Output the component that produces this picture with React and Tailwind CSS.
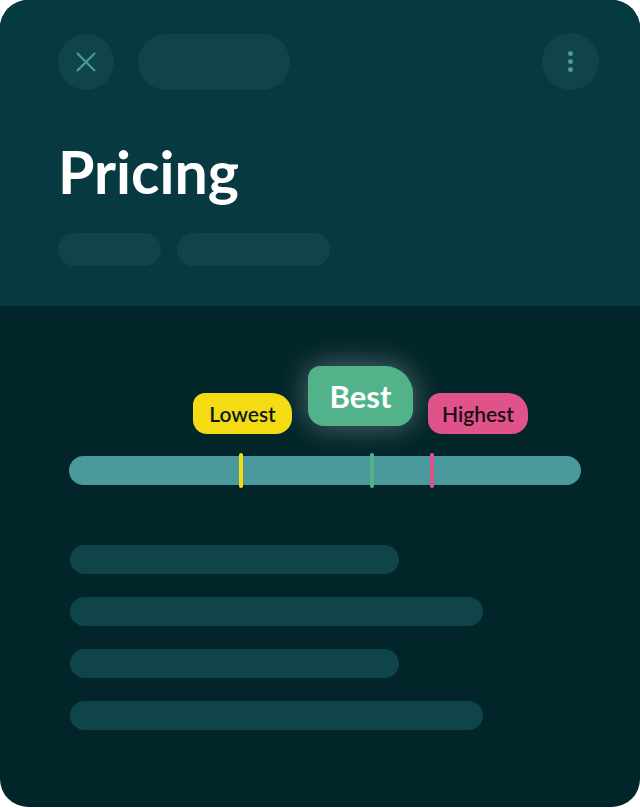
const markers = [
  { left: 'left-[170px]', color: 'bg-[#f5dc12]' },
  { left: 'left-[301px]', color: 'bg-[#52b38b]' },
  { left: 'left-[361px]', color: 'bg-[#e0528a]' },
];

export default function App() {
  return (
    <div className="min-h-screen bg-white" style={{ fontFamily: 'Lato, "Open Sans", sans-serif' }}>
      <div className="w-[640px] h-[807px] rounded-[28px] overflow-hidden flex flex-col bg-[#02252a]">
        {/* header */}
        <header className="h-[306px] shrink-0 bg-[#063a40] pl-[58px] pr-[41px] pt-[33px]">
          <div className="flex items-center justify-between">
            <div className="flex items-center gap-6">
              <button className="w-14 h-14 rounded-full bg-[#0f4549] flex items-center justify-center">
                <svg width="20" height="20" viewBox="0 0 20 20" fill="none" stroke="#4a9a9c" strokeWidth="2.2">
                  <path d="M1 1L19 19M19 1L1 19" />
                </svg>
              </button>
              <div className="w-[152px] h-14 rounded-full bg-[#0f4549]" />
            </div>
            <button className="w-[57px] h-[57px] rounded-full bg-[#0f4549] flex flex-col items-center justify-center gap-[3px]">
              <span className="w-[5px] h-[5px] rounded-full bg-[#4a9a9c]" />
              <span className="w-[5px] h-[5px] rounded-full bg-[#4a9a9c]" />
              <span className="w-[5px] h-[5px] rounded-full bg-[#4a9a9c]" />
            </button>
          </div>
          <h1 className="mt-[52px] text-[59px] leading-none font-bold text-white">Pricing</h1>
          <div className="mt-[32px] flex gap-4">
            <div className="w-[103px] h-[33px] rounded-full bg-[#0f4549]" />
            <div className="w-[153px] h-[33px] rounded-full bg-[#0f4549]" />
          </div>
        </header>

        {/* body */}
        <section className="flex-1">
          <div className="relative ml-[69px] w-[512px] mt-[60px] pt-[90px]">
            <div className="h-[29px] rounded-full bg-[#4a999c]" />
            {markers.map((m, i) => (
              <span key={i} className={`absolute top-[87px] w-1 h-[35px] rounded-full ${m.left} ${m.color}`} />
            ))}
            <div className="absolute left-[124px] top-[27px] w-[99px] h-[41px] rounded-[12px_20px_16px_14px] bg-[#f5dc12] flex items-center justify-center text-[21px] font-semibold text-[#0d1a1a]">
              Lowest
            </div>
            <div className="absolute left-[239px] top-0 w-[105px] h-[60px] rounded-[12px_28px_16px_16px] bg-[#52b38b] flex items-center justify-center text-[31px] font-bold text-white shadow-[0_0_30px_rgba(255,255,255,0.35)]">
              Best
            </div>
            <div className="absolute left-[359px] top-[27px] w-[100px] h-[41px] rounded-[12px_20px_16px_14px] bg-[#e0528a] flex items-center justify-center text-[21px] font-semibold text-[#1a0d14]">
              Highest
            </div>
          </div>

          <div className="mt-[60px] ml-[70px] flex flex-col gap-[23px]">
            <div className="w-[329px] h-[29px] rounded-full bg-[#0f4549]" />
            <div className="w-[413px] h-[29px] rounded-full bg-[#0f4549]" />
            <div className="w-[329px] h-[29px] rounded-full bg-[#0f4549]" />
            <div className="w-[413px] h-[29px] rounded-full bg-[#0f4549]" />
          </div>
        </section>
      </div>
    </div>
  );
}
